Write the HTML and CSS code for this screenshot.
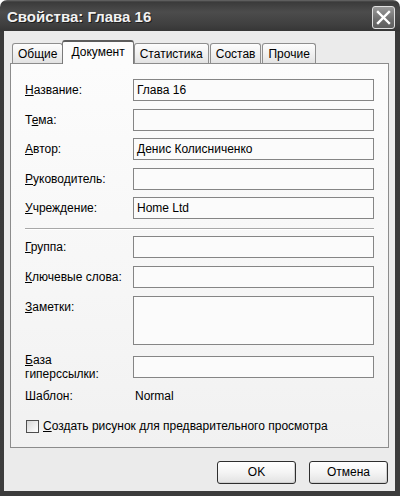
FILE: index.html
```html
<!DOCTYPE html>
<html lang="ru">
<head>
<meta charset="utf-8">
<link rel="stylesheet" href="styles.css">
</head>
<body>
<div class="window">
  <div class="titlebar">
    <span class="title">Свойства: Глава 16</span>
    <div class="close">
      <svg width="15" height="15" viewBox="0 0 15 15"><path d="M2 2 L13 13 M13 2 L2 13" stroke="#fff" stroke-width="2.4" stroke-linecap="square" fill="none"/></svg>
    </div>
  </div>
  <div class="client">
    <div class="tabs">
      <div class="tab">Общие</div>
      <div class="tab active">Документ</div>
      <div class="tab">Статистика</div>
      <div class="tab">Состав</div>
      <div class="tab">Прочие</div>
    </div>
    <div class="panel">
      <div class="grid g1">
        <div class="lbl"><u>Н</u>азвание:</div><div class="field">Глава 16</div>
        <div class="lbl">Т<u>е</u>ма:</div><div class="field"></div>
        <div class="lbl"><u>А</u>втор:</div><div class="field">Денис Колисниченко</div>
        <div class="lbl"><u>Р</u>уководитель:</div><div class="field"></div>
        <div class="lbl"><u>У</u>чреждение:</div><div class="field">Home Ltd</div>
      </div>
      <div class="sep"></div>
      <div class="grid g2">
        <div class="lbl"><u>Г</u>руппа:</div><div class="field"></div>
        <div class="lbl"><u>К</u>лючевые слова:</div><div class="field"></div>
        <div class="lbl"><u>З</u>аметки:</div><div class="field tall"></div>
        <div class="lbl two"><u>Б</u>аза<br>гиперссылки:</div><div class="field mid"></div>
        <div class="lbl plain">Шаблон:</div><div class="value">Normal</div>
      </div>
      <div class="check"><span class="box"></span><span><u>С</u>оздать рисунок для предварительного просмотра</span></div>
    </div>
    <div class="buttons">
      <div class="btn">OK</div>
      <div class="btn">Отмена</div>
    </div>
  </div>
</div>
</body>
</html>
```

FILE: styles.css
```css
html, body {
  margin: 0;
  background: #fff;
}
body {
  font-family: "Liberation Sans", Arial, sans-serif;
  font-size: 12px;
  color: #000;
}
.window {
  width: 400px;
  height: 496px;
  box-sizing: border-box;
  display: flex;
  flex-direction: column;
  padding: 0 5px 5px 4px;
  border-radius: 7px 7px 0 0;
  background: linear-gradient(#6a6a6a 0, #3a3a3a 2px, #4c4c4c 12px, #404040 24px, #363636 31px, #3a3a3a 32px, #3c3c3c 100%);
}
.titlebar {
  height: 31px;
  display: flex;
  align-items: center;
  justify-content: space-between;
  padding-left: 3px;
}
.title {
  color: #f2f2f2;
  font-weight: bold;
  font-size: 15px;
  text-shadow: 1px 1px 0 #1e1e1e;
  margin-top: 1px;
}
.close {
  width: 21px;
  height: 21px;
  border: 1px solid #e0e0e0;
  border-radius: 3px;
  background: linear-gradient(#9a9a9a, #6e6e6e 60%, #5e5e5e);
  display: flex;
  align-items: center;
  justify-content: center;
  margin-top: 4px;
}
.client {
  flex: 1;
  background: #ebebeb;
  display: flex;
  flex-direction: column;
  padding: 9px 6px 0 6px;
}
.tabs {
  display: flex;
  align-items: flex-end;
  height: 23px;
  padding-left: 2px;
}
.tab {
  height: 19px;
  line-height: 20px;
  padding: 0 5px;
  margin-right: 1px;
  border: 1px solid #8e8e8e;
  border-bottom: none;
  border-radius: 3px 3px 0 0;
  background: linear-gradient(#fdfdfd, #ececec 70%, #e2e2e2);
  white-space: nowrap;
}
.tab.active {
  height: 22px;
  line-height: 20px;
  padding: 0 8px;
  margin: 0 -1px -1px -2px;
  position: relative;
  z-index: 1;
  background: #fcfcfc;
  border-color: #7a7a7a;
  border-top: 2px solid #5c5c5c;
}
.tab.active + .tab {
  margin-left: 1px;
}
.panel {
  height: 385px;
  box-sizing: border-box;
  border: 1px solid #8c8c8c;
  background: linear-gradient(#fcfcfc, #f6f6f6 60%, #f1f1f1);
  padding: 15px 14px 0 14px;
  display: flex;
  flex-direction: column;
}
.grid {
  display: grid;
  grid-template-columns: 108px 241px;
  align-items: start;
}
.g1 {
  row-gap: 7.5px;
}
.g2 {
  row-gap: 8px;
}
.lbl {
  line-height: 14px;
  padding-top: 4px;
  white-space: nowrap;
}
.lbl.two {
  padding-top: 0;
  align-self: center;
}
.lbl.plain {
  padding-top: 0;
}
.two + .field {
  align-self: center;
}
.field {
  height: 22px;
  box-sizing: border-box;
  border: 1px solid #858585;
  background: #fbfbfb;
  padding: 0 3px;
  line-height: 20px;
  white-space: nowrap;
}
.field.tall {
  height: 49px;
}
.value {
  line-height: 14px;
  padding-left: 2px;
}
.sep {
  height: 0;
  border-top: 1px solid #a8a8a8;
  border-bottom: 1px solid #ffffff;
  margin: 9px 0 6px 0;
}
.check {
  display: flex;
  align-items: center;
  gap: 4px;
  margin-top: 16px;
  margin-left: 1px;
  line-height: 14px;
}
.box {
  width: 11px;
  height: 11px;
  border: 1px solid #4e4e4e;
  background: linear-gradient(135deg, #d6d6d6, #f4f4f4 70%, #fff);
}
.buttons {
  display: flex;
  justify-content: flex-end;
  gap: 13px;
  margin-top: 13px;
  padding-right: 1px;
}
.btn {
  width: 77px;
  height: 21px;
  line-height: 21px;
  text-align: center;
  border: 1px solid #2e2e2e;
  border-radius: 3px;
  background: linear-gradient(#ffffff, #f4f4f4 50%, #e2e2e2);
  box-shadow: inset -1px -1px 0 #cfcfcf;
}
```
